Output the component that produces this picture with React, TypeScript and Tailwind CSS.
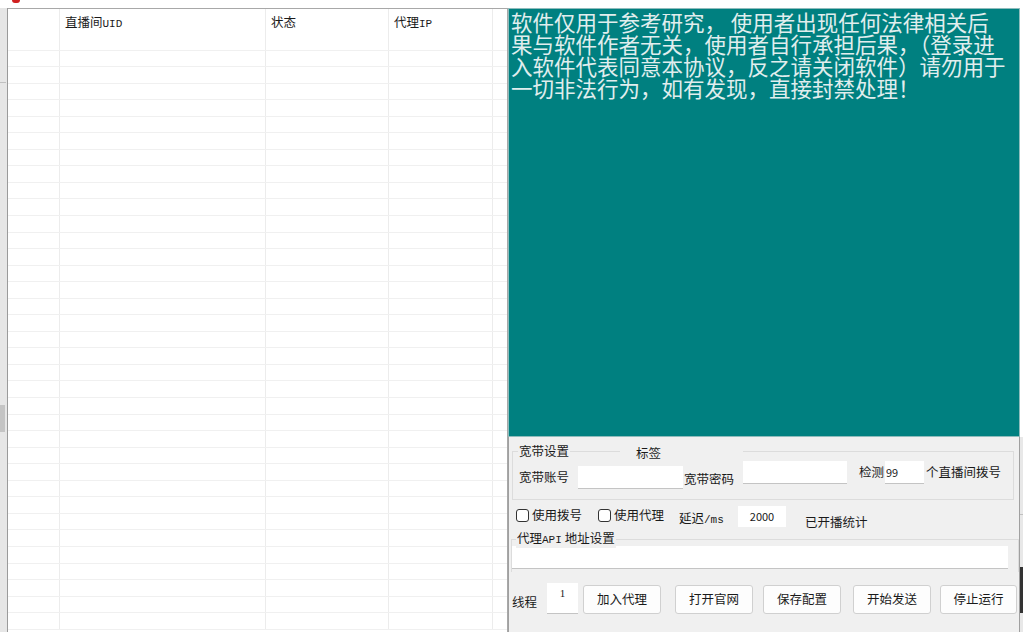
import React from "react";

const F = { fontFamily: '"Noto Sans CJK SC", "Noto Sans", sans-serif' };
const M = { fontFamily: '"Liberation Mono", "DejaVu Sans Mono", monospace' };

function Cells({ h, texts }: { h: string; texts?: React.ReactNode[] }) {
  return (
    <div className={`flex ${h}`}>
      <div className="w-[52px] border-r border-[#ececec]" />
      <div className="w-[206px] border-r border-[#ececec] pl-[5px] pt-[4px]">{texts?.[0]}</div>
      <div className="w-[123px] border-r border-[#ececec] pl-[5px] pt-[4px]">{texts?.[1]}</div>
      <div className="w-[104px] border-r border-[#ececec] pl-[5px] pt-[4px]">{texts?.[2]}</div>
      <div className="w-[14px]" />
    </div>
  );
}

function Btn({ label, w }: { label: string; w: string }) {
  return (
    <div
      className={`${w} h-[29px] bg-[#fdfdfd] border border-[#d0d0d0] rounded-[3px] flex items-center justify-center text-[12.5px] text-[#1a1a1a]`}
    >
      {label}
    </div>
  );
}

function Check() {
  return <div className="w-[13px] h-[13px] border border-[#333] rounded-[3px] bg-white" />;
}

export default function App() {
  const rows = Array.from({ length: 36 });
  return (
    <div className="w-[1024px] h-[632px] overflow-hidden bg-white relative text-[#1a1a1a]" style={F}>
      {/* top strip */}
      <div className="h-[8px] relative bg-white">
        <div className="absolute left-[12px] top-0 w-[8px] h-[3px] bg-[#d02020] rounded-b-[3px]" />
      </div>
      <div className="flex h-[624px]">
        {/* left strip */}
        <div className="w-[8px] h-full bg-[#e6e6e6] border-r border-[#9a9a9a] relative">
          <div className="absolute left-0 top-[74px] w-[6px] h-[1px] bg-[#c0c0c0]" />
          <div className="absolute left-0 top-[397px] w-[5px] h-[27px] bg-[#c4c4c4]" />
        </div>
        {/* table */}
        <div className="w-[500px] h-full border-t border-r border-[#a8a8a8] bg-white text-[12.5px] overflow-hidden">
          <Cells
            h="h-[25px]"
            texts={[
              <>直播间<span className="text-[11px]" style={M}>UID</span></>,
              "状态",
              <>代理<span className="text-[11px]" style={M}>IP</span></>,
            ]}
          />
          {rows.map((_, i) => (
            <div key={i} className="border-b border-[#f0f0f0]">
              <Cells h="h-[15.55px]" />
            </div>
          ))}
        </div>
        {/* right panel */}
        <div className="w-[512px] h-full flex flex-col">
          <div className="h-[429px] bg-[#008080] border border-[#8fbcbc] pl-[2px] pt-[2px] text-[21.5px] leading-[22px] text-[#e0eeee] whitespace-pre-line">
            {"软件仅用于参考研究，  使用者出现任何法律相关后\n果与软件作者无关，使用者自行承担后果，（登录进\n入软件代表同意本协议，反之请关闭软件）请勿用于\n一切非法行为，如有发现，直接封禁处理！"}
          </div>
          <div className="flex-1 bg-[#f0f0f0] border-l border-r border-[#a0a0a0] text-[12.5px] flex flex-col">
            {/* group 1 */}
            <div className="ml-[3px] mt-[14px] w-[502px] h-[49px] border border-[#dcdcdc] relative flex items-start">
              <div className="absolute left-[5px] -top-[9px] px-[1px] bg-[#f0f0f0] leading-[16px]">宽带设置</div>
              <div className="absolute left-[107px] -top-[9px] w-[123px] h-[16px] bg-[#f0f0f0] pl-[16px] pt-[2px] leading-[16px]">标签</div>
              <div className="ml-[6px] mt-[17px] w-[50px] leading-[16px]">宽带账号</div>
              <div className="ml-[9px] mt-[14px] w-[105px] h-[23px] bg-white border-b border-[#c4c4c4]" />
              <div className="ml-[1px] mt-[19px] w-[50px] leading-[16px]">宽带密码</div>
              <div className="ml-[9px] mt-[9px] w-[104px] h-[23px] bg-white border-b border-[#c4c4c4]" />
              <div className="ml-[12px] mt-[12px] w-[25px] leading-[16px]">检测</div>
              <div className="ml-[1px] mt-[9px] w-[39px] h-[23px] bg-white border-b border-[#c4c4c4] text-[11px] leading-[23px] pl-[1px]">99</div>
              <div className="ml-[2px] mt-[12px] leading-[16px]">个直播间拨号</div>
            </div>
            {/* row 2 */}
            <div className="h-[39px] flex items-start">
              <div className="ml-[7px] mt-[9px]"><Check /></div>
              <div className="ml-[3px] mt-[7px] w-[50px] leading-[16px]">使用拨号</div>
              <div className="ml-[16px] mt-[9px]"><Check /></div>
              <div className="ml-[3px] mt-[7px] w-[50px] leading-[16px]">使用代理</div>
              <div className="ml-[15px] mt-[10px] w-[59px] leading-[16px]">
                延迟<span className="text-[11px]" style={M}>/ms</span>
              </div>
              <div className="mt-[6px] w-[48px] h-[21px] bg-white text-[11px] leading-[21px] text-center">2000</div>
              <div className="ml-[19px] mt-[14px] leading-[16px]">已开播统计</div>
            </div>
            {/* group 2 */}
            <div className="ml-[2px] w-[508px] h-[33px] border-t border-l border-r border-[#dcdcdc] relative">
              <div className="absolute left-[4px] -top-[10px] px-[1px] bg-[#f0f0f0] leading-[16px]">
                代理<span className="text-[11px]" style={M}>API</span> 地址设置
              </div>
              <div className="mt-[6px] w-[496px] h-[23px] bg-white border-b border-[#c4c4c4]" />
            </div>
            {/* bottom row */}
            <div className="flex items-start mt-[11px]">
              <div className="ml-[3px] mt-[11px] w-[25px] leading-[16px]">线程</div>
              <div className="ml-[10px] w-[31px] h-[31px] bg-white border-b border-[#c4c4c4] text-[11px] text-center pt-[2px]" style={{ fontFamily: '"Liberation Serif", serif' }}>1</div>
              <div className="ml-[5px] mt-[2px] flex">
                <Btn label="加入代理" w="w-[78px]" />
                <div className="ml-[14px]"><Btn label="打开官网" w="w-[78px]" /></div>
                <div className="ml-[10px]"><Btn label="保存配置" w="w-[78px]" /></div>
                <div className="ml-[12px]"><Btn label="开始发送" w="w-[78px]" /></div>
                <div className="ml-[9px]"><Btn label="停止运行" w="w-[77px]" /></div>
              </div>
            </div>
          </div>
        </div>
        {/* right edge strip */}
        <div className="w-[3px] h-full bg-white relative">
          <div className="absolute left-0 top-[429px] w-[3px] h-[195px] bg-[#e8e8e8]" />
          <div className="absolute left-0 top-[506px] w-[3px] h-[1px] bg-[#c0c0c0]" />
          <div className="absolute left-0 top-[559px] w-[3px] h-[46px] bg-[#333]" />
        </div>
      </div>
    </div>
  );
}
